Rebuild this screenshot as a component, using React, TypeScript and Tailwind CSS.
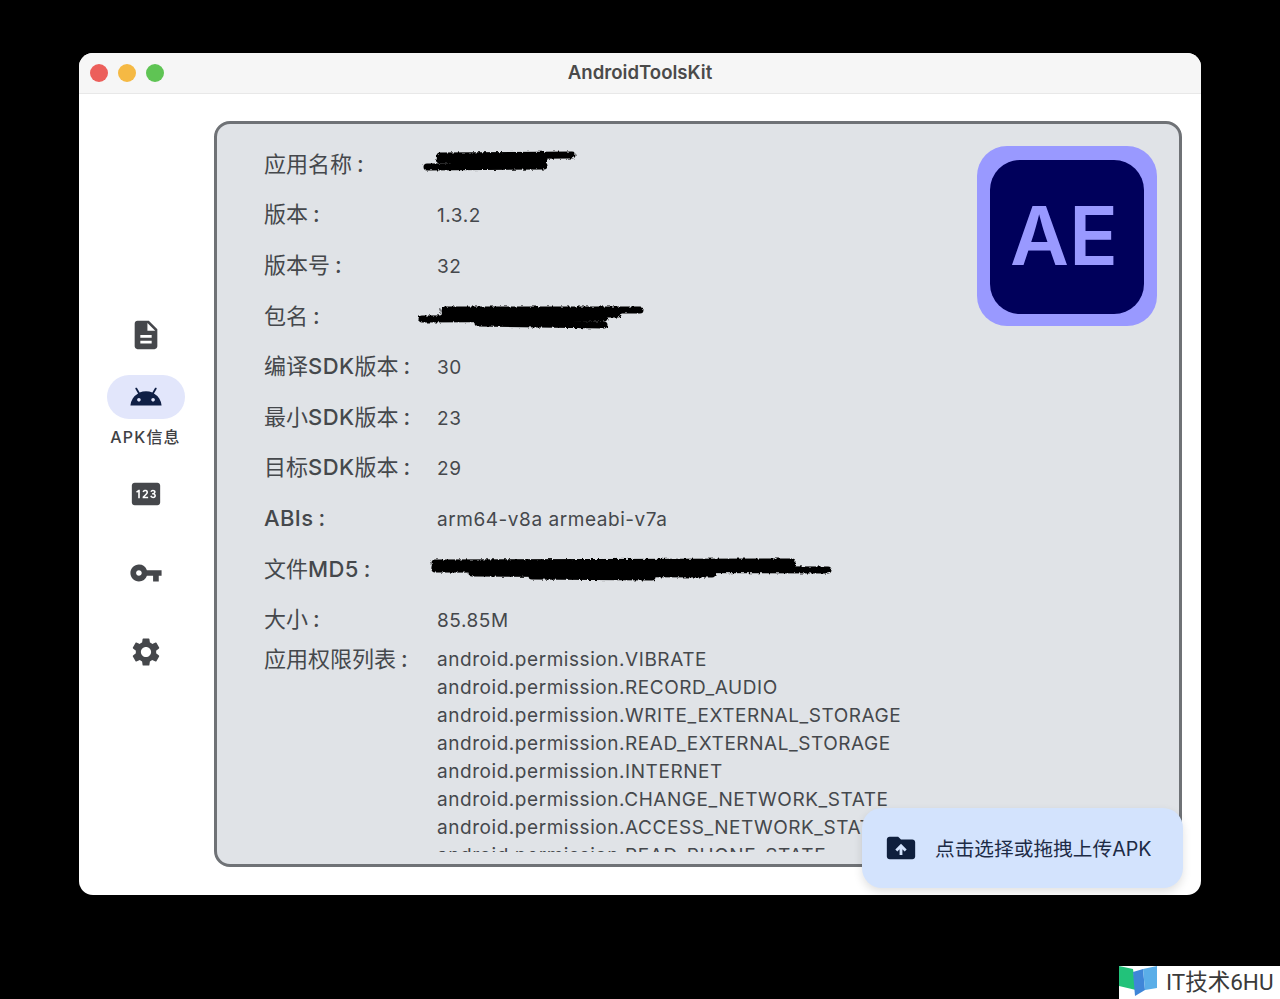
import React from 'react';
import { MdDescription, MdPin, MdSettings, MdVpnKey } from 'react-icons/md';

const pageFont = "font-['Inter','Noto_Sans_CJK_SC',sans-serif]";

const AndroidIcon = () => (
  <svg viewBox="0 -960 960 960" className="w-[34px] h-[34px]" fill="#0f1f45">
    <path
      fillRule="evenodd"
      d="M40-240q9-107 65.5-197T256-580l-74-128q-6-9-3-19t13-15q8-5 18-2t16 12l74 128q86-36 180-36t180 36l74-128q6-9 16-12t18 2q10 5 13 15t-3 19l-74 128q94 53 150.5 143T920-240H40Zm240-110q21 0 35.5-14.5T330-400q0-21-14.5-35.5T280-450q-21 0-35.5 14.5T230-400q0 21 14.5 35.5T280-350Zm400 0q21 0 35.5-14.5T730-400q0-21-14.5-35.5T680-450q-21 0-35.5 14.5T630-400q0 21 14.5 35.5T680-350Z"
    />
  </svg>
);

const FolderUploadIcon = () => (
  <svg viewBox="0 -960 960 960" className="w-[34px] h-[34px]" fill="#0f1f3d">
    <path d="M440-280h80v-168l64 64 56-56-160-160-160 160 56 56 64-64v168ZM160-160q-33 0-56.5-23.5T80-240v-480q0-33 23.5-56.5T160-800h240l80 80h320q33 0 56.5 23.5T880-640v400q0 33-23.5 56.5T800-160H160Z" />
  </svg>
);

// hand-drawn marker that hides a value in the screenshot
const Scribble = ({ width, height, lines }: { width: number; height: number; lines: string[] }) => (
  <svg width={width} height={height} viewBox={`0 0 ${width} ${height}`} className="overflow-visible">
    <defs>
      <filter id="rough" x="-5%" y="-40%" width="110%" height="180%">
        <feTurbulence type="fractalNoise" baseFrequency="0.35" numOctaves="2" seed="4" />
        <feDisplacementMap in="SourceGraphic" scale="3.5" />
      </filter>
    </defs>
    <g filter="url(#rough)" fill="none" stroke="#050505" strokeLinecap="round" strokeWidth="7">
      {lines.map((d) => (
        <path key={d} d={d} />
      ))}
    </g>
  </svg>
);

// latin runs sit a bit heavier than the CJK ones in the labels
const Label = ({ text }: { text: string }) => (
  <>
    {text.split(/([A-Za-z0-9]+)/).map((part, i) =>
      /[A-Za-z0-9]/.test(part) ? (
        <span key={i} className="font-medium tracking-[0.4px]">
          {part}
        </span>
      ) : (
        <span key={i}>{part}</span>
      ),
    )}
    <span className="ml-[5px] font-medium">:</span>
  </>
);

const rows = [
  { label: '应用名称', scribble: { ml: -13, mt: -5, width: 152, height: 24, lines: ['M16 6 L148 5', 'M16 10 L120 10', 'M3 17 L120 16', 'M30 13 L110 13'] } },
  { label: '版本', value: '1.3.2' },
  { label: '版本号', value: '32' },
  { label: '包名', scribble: { ml: -19, mt: 4, width: 226, height: 26, lines: ['M26 5 L222 5', 'M26 9 L200 9', 'M4 14 L186 13', 'M60 18 L186 20', 'M30 11 L180 11'] } },
  { label: '编译SDK版本', value: '30' },
  { label: '最小SDK版本', value: '23' },
  { label: '目标SDK版本', value: '29' },
  { label: 'ABIs', value: 'arm64-v8a armeabi-v7a' },
  { label: '文件MD5', scribble: { ml: -5, mt: 0, width: 400, height: 24, lines: ['M3 6 L360 5', 'M3 12 L396 13', 'M3 10 L360 9', 'M40 16 L280 17', 'M100 19 L220 20'] } },
  { label: '大小', value: '85.85M' },
];

const permissions = [
  'android.permission.VIBRATE',
  'android.permission.RECORD_AUDIO',
  'android.permission.WRITE_EXTERNAL_STORAGE',
  'android.permission.READ_EXTERNAL_STORAGE',
  'android.permission.INTERNET',
  'android.permission.CHANGE_NETWORK_STATE',
  'android.permission.ACCESS_NETWORK_STATE',
  'android.permission.READ_PHONE_STATE',
];

export default function App() {
  return (
    <div className={`relative w-full h-[999px] bg-black pt-[53px] pl-[79px] overflow-hidden ${pageFont}`}>
      <div className="relative w-[1122px] h-[842px] bg-white rounded-[14px] overflow-hidden flex flex-col">
        {/* Title bar */}
        <div className="relative h-[41px] shrink-0 bg-[#f6f6f6] border-b border-[#e8e8e8] flex items-center justify-center">
          <div className="absolute left-[11px] top-[11px] flex gap-[10px]">
            <div className="w-[18px] h-[18px] rounded-full bg-[#ec5f5b]" />
            <div className="w-[18px] h-[18px] rounded-full bg-[#f5b944]" />
            <div className="w-[18px] h-[18px] rounded-full bg-[#5fc454]" />
          </div>
          <span className="text-[18.6px] font-semibold text-[#4a4a4a] -mt-[1px]">AndroidToolsKit</span>
        </div>

        <div className="flex flex-1 min-h-0">
          {/* Nav rail */}
          <div className="w-[135px] shrink-0 flex flex-col items-center pr-[2px] pt-[224px] text-[#45474b]">
            <MdDescription className="w-[34px] h-[34px]" />
            <div className="mt-[23px] w-[78px] h-[44px] rounded-full bg-[#e2e6fb] flex items-center justify-center">
              <AndroidIcon />
            </div>
            <span className="mt-[8px] text-[16px] leading-[20px] font-medium tracking-[1.2px] text-[#3f4145] whitespace-nowrap">APK信息</span>
            <MdPin className="mt-[30px] w-[34px] h-[34px]" />
            <MdVpnKey className="mt-[45px] w-[34px] h-[34px]" />
            <MdSettings className="mt-[45px] w-[34px] h-[34px]" />
          </div>

          {/* Info panel */}
          <div className="mt-[27px] w-[968px] h-[746px] rounded-[16px] border-[3px] border-[#6f7276] bg-[#e0e3e7] flex justify-between pl-[47px] pr-[22px] pt-[15px] pb-[12px] text-[#45484c]">
            <div className="flex-1 min-w-0 overflow-hidden">
              {rows.map((row) => (
                <div key={row.label} className="flex items-center h-[50.6px]">
                  <div className="w-[173px] shrink-0 text-[22px] whitespace-nowrap">
                    <Label text={row.label} />
                  </div>
                  {row.scribble ? (
                    <div style={{ marginLeft: row.scribble.ml, marginTop: row.scribble.mt }}>
                      <Scribble width={row.scribble.width} height={row.scribble.height} lines={row.scribble.lines} />
                    </div>
                  ) : (
                    <div className="text-[19px] tracking-[0.55px] mt-[3px]">{row.value}</div>
                  )}
                </div>
              ))}
              <div className="flex">
                <div className="w-[173px] shrink-0 text-[22px] leading-[28px] whitespace-nowrap">
                  <Label text="应用权限列表" />
                </div>
                <div className="text-[19px] leading-[28px] tracking-[0.55px] mt-[1px]">
                  {permissions.map((p) => (
                    <div key={p}>{p}</div>
                  ))}
                </div>
              </div>
            </div>
            <div className="w-[180px] h-[180px] shrink-0 mt-[7px] rounded-[30px] bg-[#9999ff] flex items-center justify-center">
              <div className="w-[154px] h-[154px] mt-[1px] rounded-[30px] bg-[#00005b] flex items-center justify-center pr-[6px]">
                <span className="font-semibold text-[81px] leading-none text-[#9999ff]">AE</span>
              </div>
            </div>
          </div>
        </div>

        {/* Upload button */}
        <div className="absolute left-[783px] top-[755px] w-[321px] h-[80px] rounded-[20px] bg-[#d3e3fd] shadow-[0_4px_10px_rgba(0,0,0,0.12)] flex items-center pl-[22px]">
          <FolderUploadIcon />
          <span className="ml-[17px] mt-[3px] text-[19.7px] text-[#1d2b45] whitespace-nowrap">点击选择或拖拽上传APK</span>
        </div>
      </div>

      {/* Site watermark */}
      <div className="absolute right-0 bottom-0 w-[161px] h-[33px] bg-white flex items-center">
        <svg viewBox="0 0 40 33" className="w-[40px] h-[33px] shrink-0">
          <polygon points="0,0 14,3 17,24 0,20" fill="#22c27a" />
          <polygon points="14,6 24,3 26,24 16,30" fill="#3f86d8" />
          <polygon points="24,3 38,0 38,22 26,24" fill="#5aaee8" />
        </svg>
        <span className="ml-[7px] font-['Roboto','Noto_Sans_CJK_SC',sans-serif] text-[22.5px] text-[#3a3a3a] leading-none whitespace-nowrap">IT技术6HU</span>
      </div>
    </div>
  );
}
